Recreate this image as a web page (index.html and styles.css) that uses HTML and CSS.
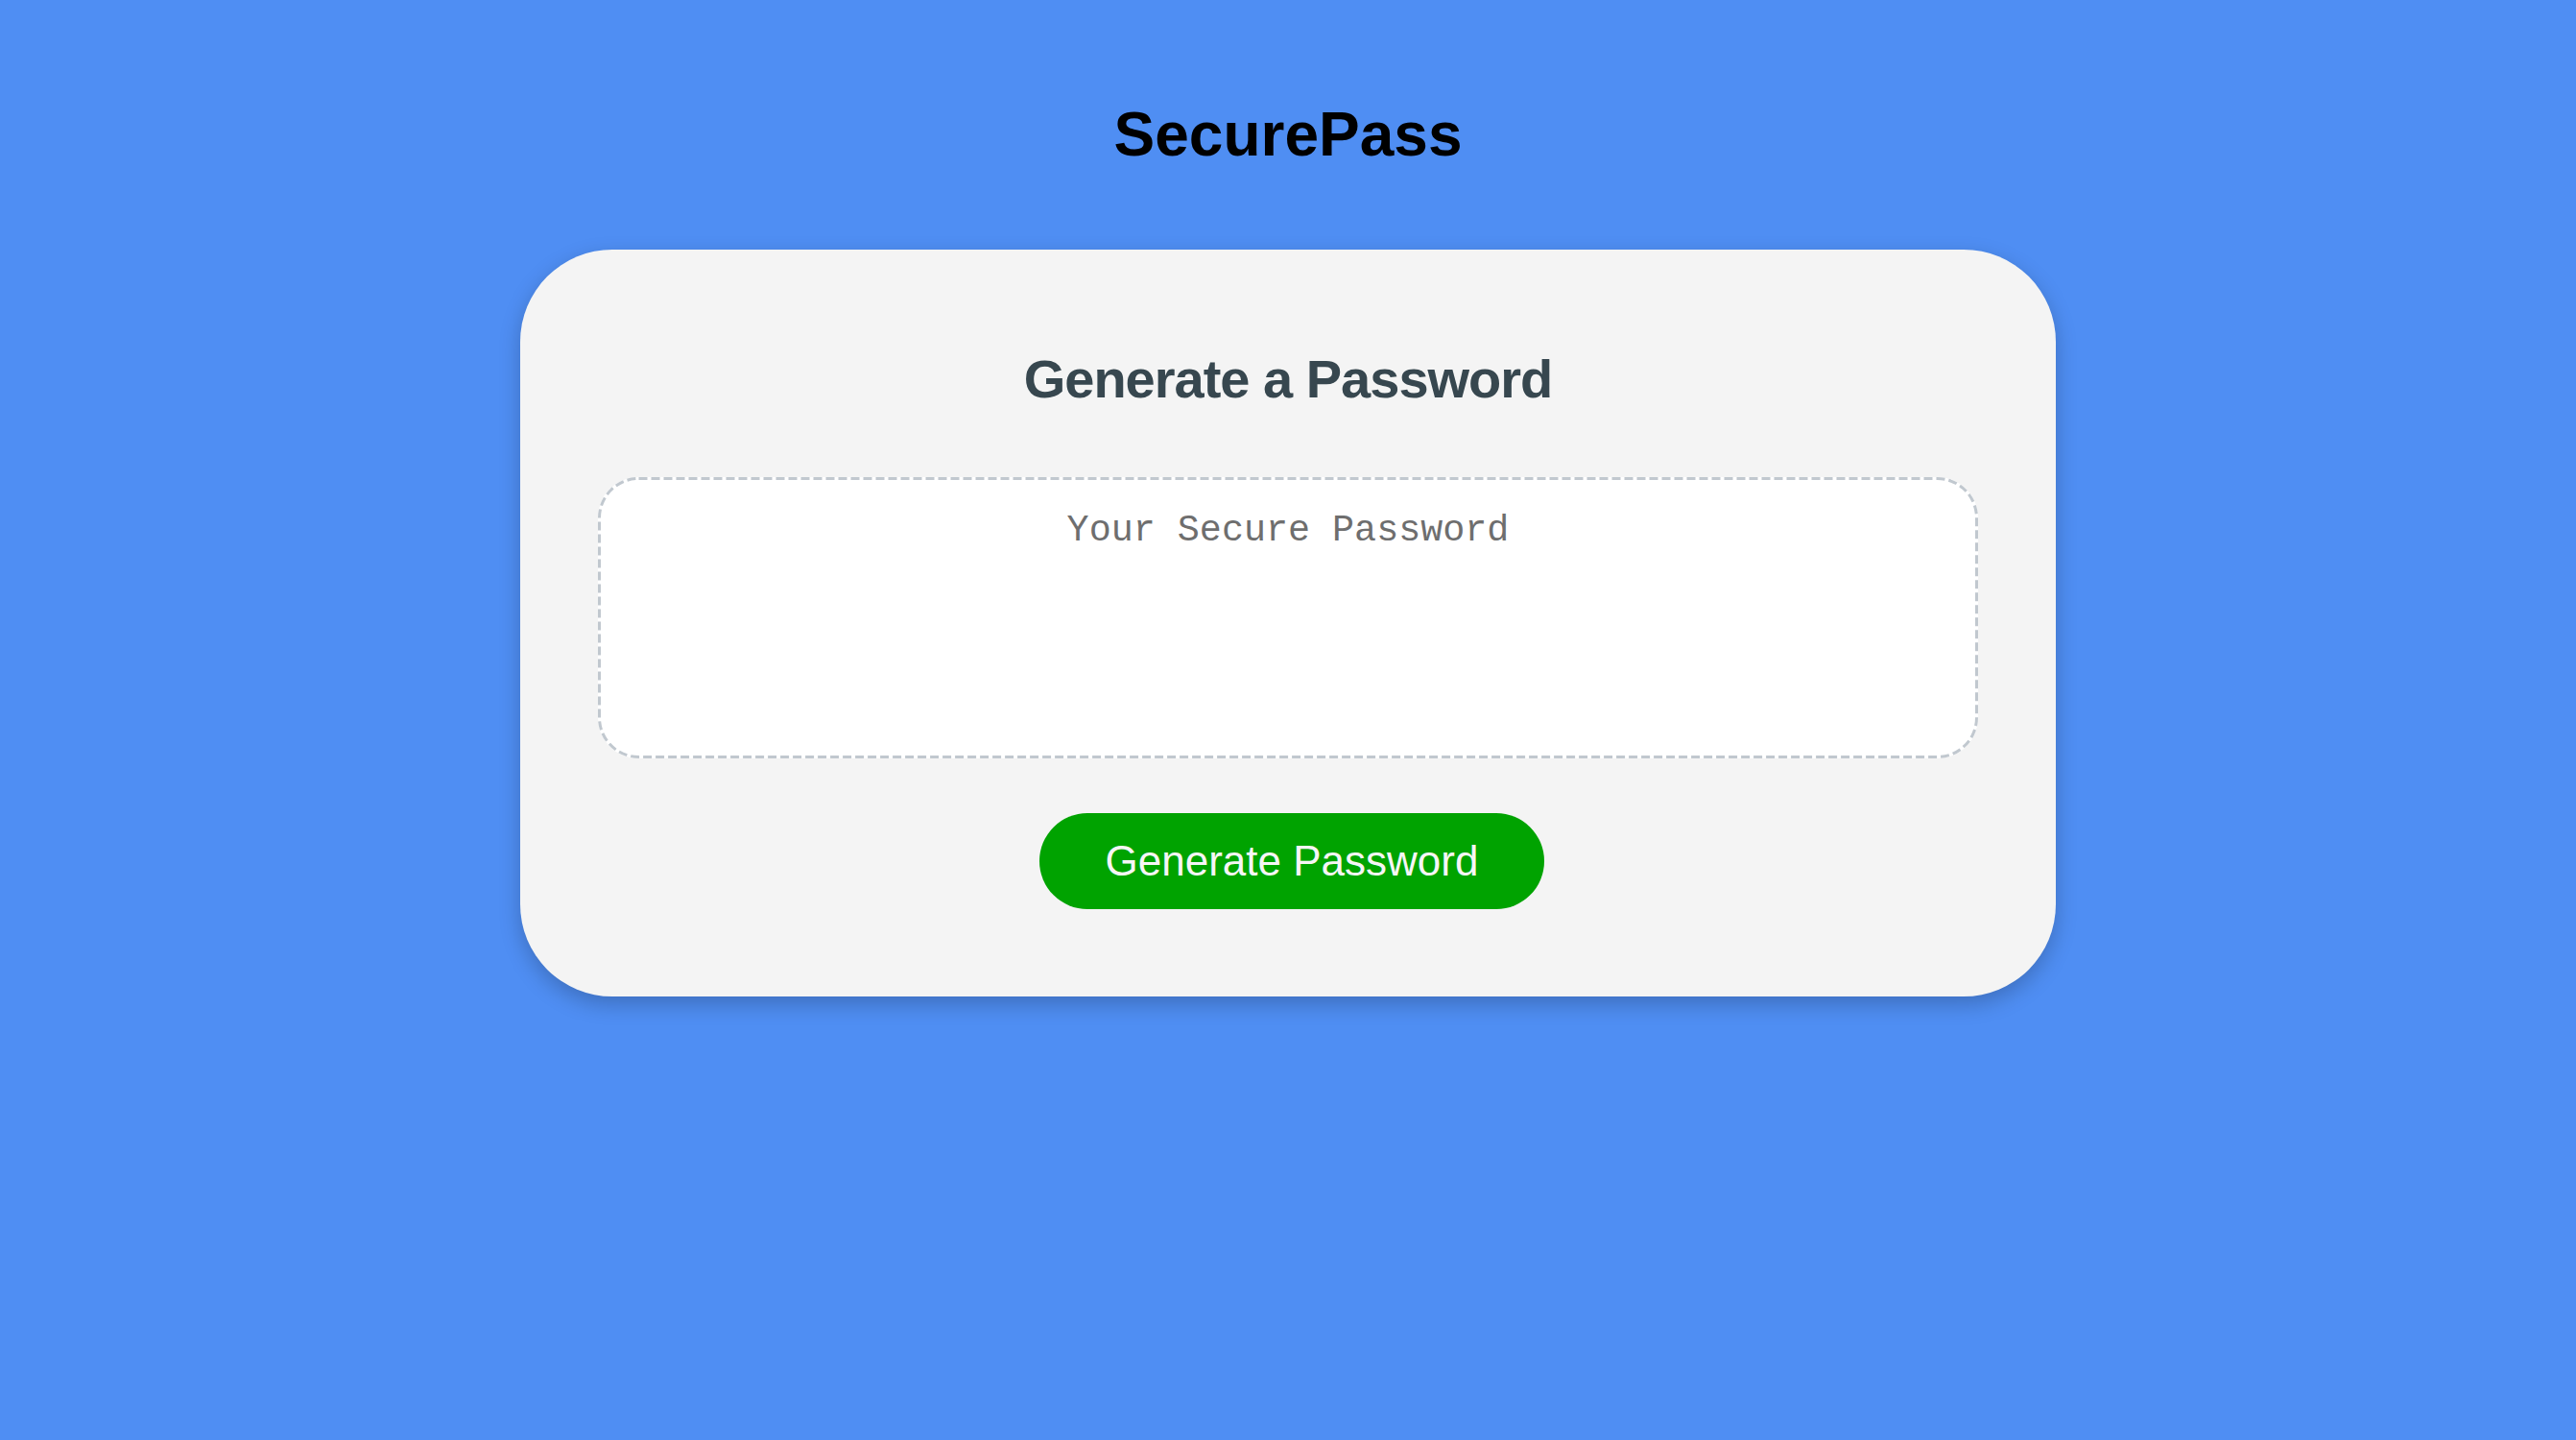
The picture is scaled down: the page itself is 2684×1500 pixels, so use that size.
FILE: index.html
```html
<!DOCTYPE html>
<html lang="en">
<head>
<meta charset="utf-8">
<title>SecurePass</title>
<link rel="stylesheet" href="styles.css">
</head>
<body>
<header class="site-header">
  <h1 class="brand">SecurePass</h1>
</header>
<main class="card">
  <h2 class="card-title">Generate a Password</h2>
  <div class="password-box">
    <svg class="dash-frame" width="1438" height="293" aria-hidden="true">
      <rect x="1.5" y="1.5" width="1435" height="290" rx="41" ry="41" fill="none" stroke="#c1c8cf" stroke-width="3" stroke-dasharray="9 4"/>
    </svg>
    <span class="placeholder">Your Secure Password</span>
  </div>
  <button class="generate-btn" type="button">Generate Password</button>
</main>
</body>
</html>
```

FILE: styles.css
```css
html, body {
  margin: 0;
  padding: 0;
}

body {
  background: #4f8ef3;
  font-family: "Liberation Sans", Arial, Helvetica, sans-serif;
  min-height: 1500px;
  display: flex;
  flex-direction: column;
  align-items: center;
}

.site-header {
  padding-top: 103px;
  padding-bottom: 83px;
}

.brand {
  margin: 0;
  font-size: 64px;
  line-height: 74px;
  font-weight: 700;
  color: #000;
  text-align: center;
}

.card {
  box-sizing: border-box;
  width: 1600px;
  height: 778px;
  background: #f4f4f4;
  border-radius: 96px;
  box-shadow: 0 8px 22px rgba(0, 0, 0, 0.22);
  padding: 103px 81px 0;
  display: flex;
  flex-direction: column;
  align-items: center;
}

.card-title {
  margin: 0;
  font-size: 56px;
  line-height: 64px;
  font-weight: 700;
  letter-spacing: -1px;
  color: #37474f;
  text-align: center;
}

.password-box {
  position: relative;
  box-sizing: border-box;
  width: 1438px;
  height: 293px;
  margin-top: 70px;
  background: #fff;
  border-radius: 42px;
  padding-top: 34px;
  text-align: center;
}

.dash-frame {
  position: absolute;
  left: 0;
  top: 0;
  pointer-events: none;
}

.placeholder {
  position: relative;
  font-family: "Liberation Mono", "Courier New", monospace;
  font-size: 38.4px;
  line-height: 44px;
  color: #6e6e6e;
}

.generate-btn {
  margin-top: 57px;
  margin-left: 8px;
  height: 100px;
  padding: 0 69px;
  border: none;
  border-radius: 50px;
  background: #00a300;
  color: #f6f6f6;
  font-family: "Liberation Sans", Arial, Helvetica, sans-serif;
  font-size: 44px;
  line-height: 50px;
  cursor: pointer;
}
```
